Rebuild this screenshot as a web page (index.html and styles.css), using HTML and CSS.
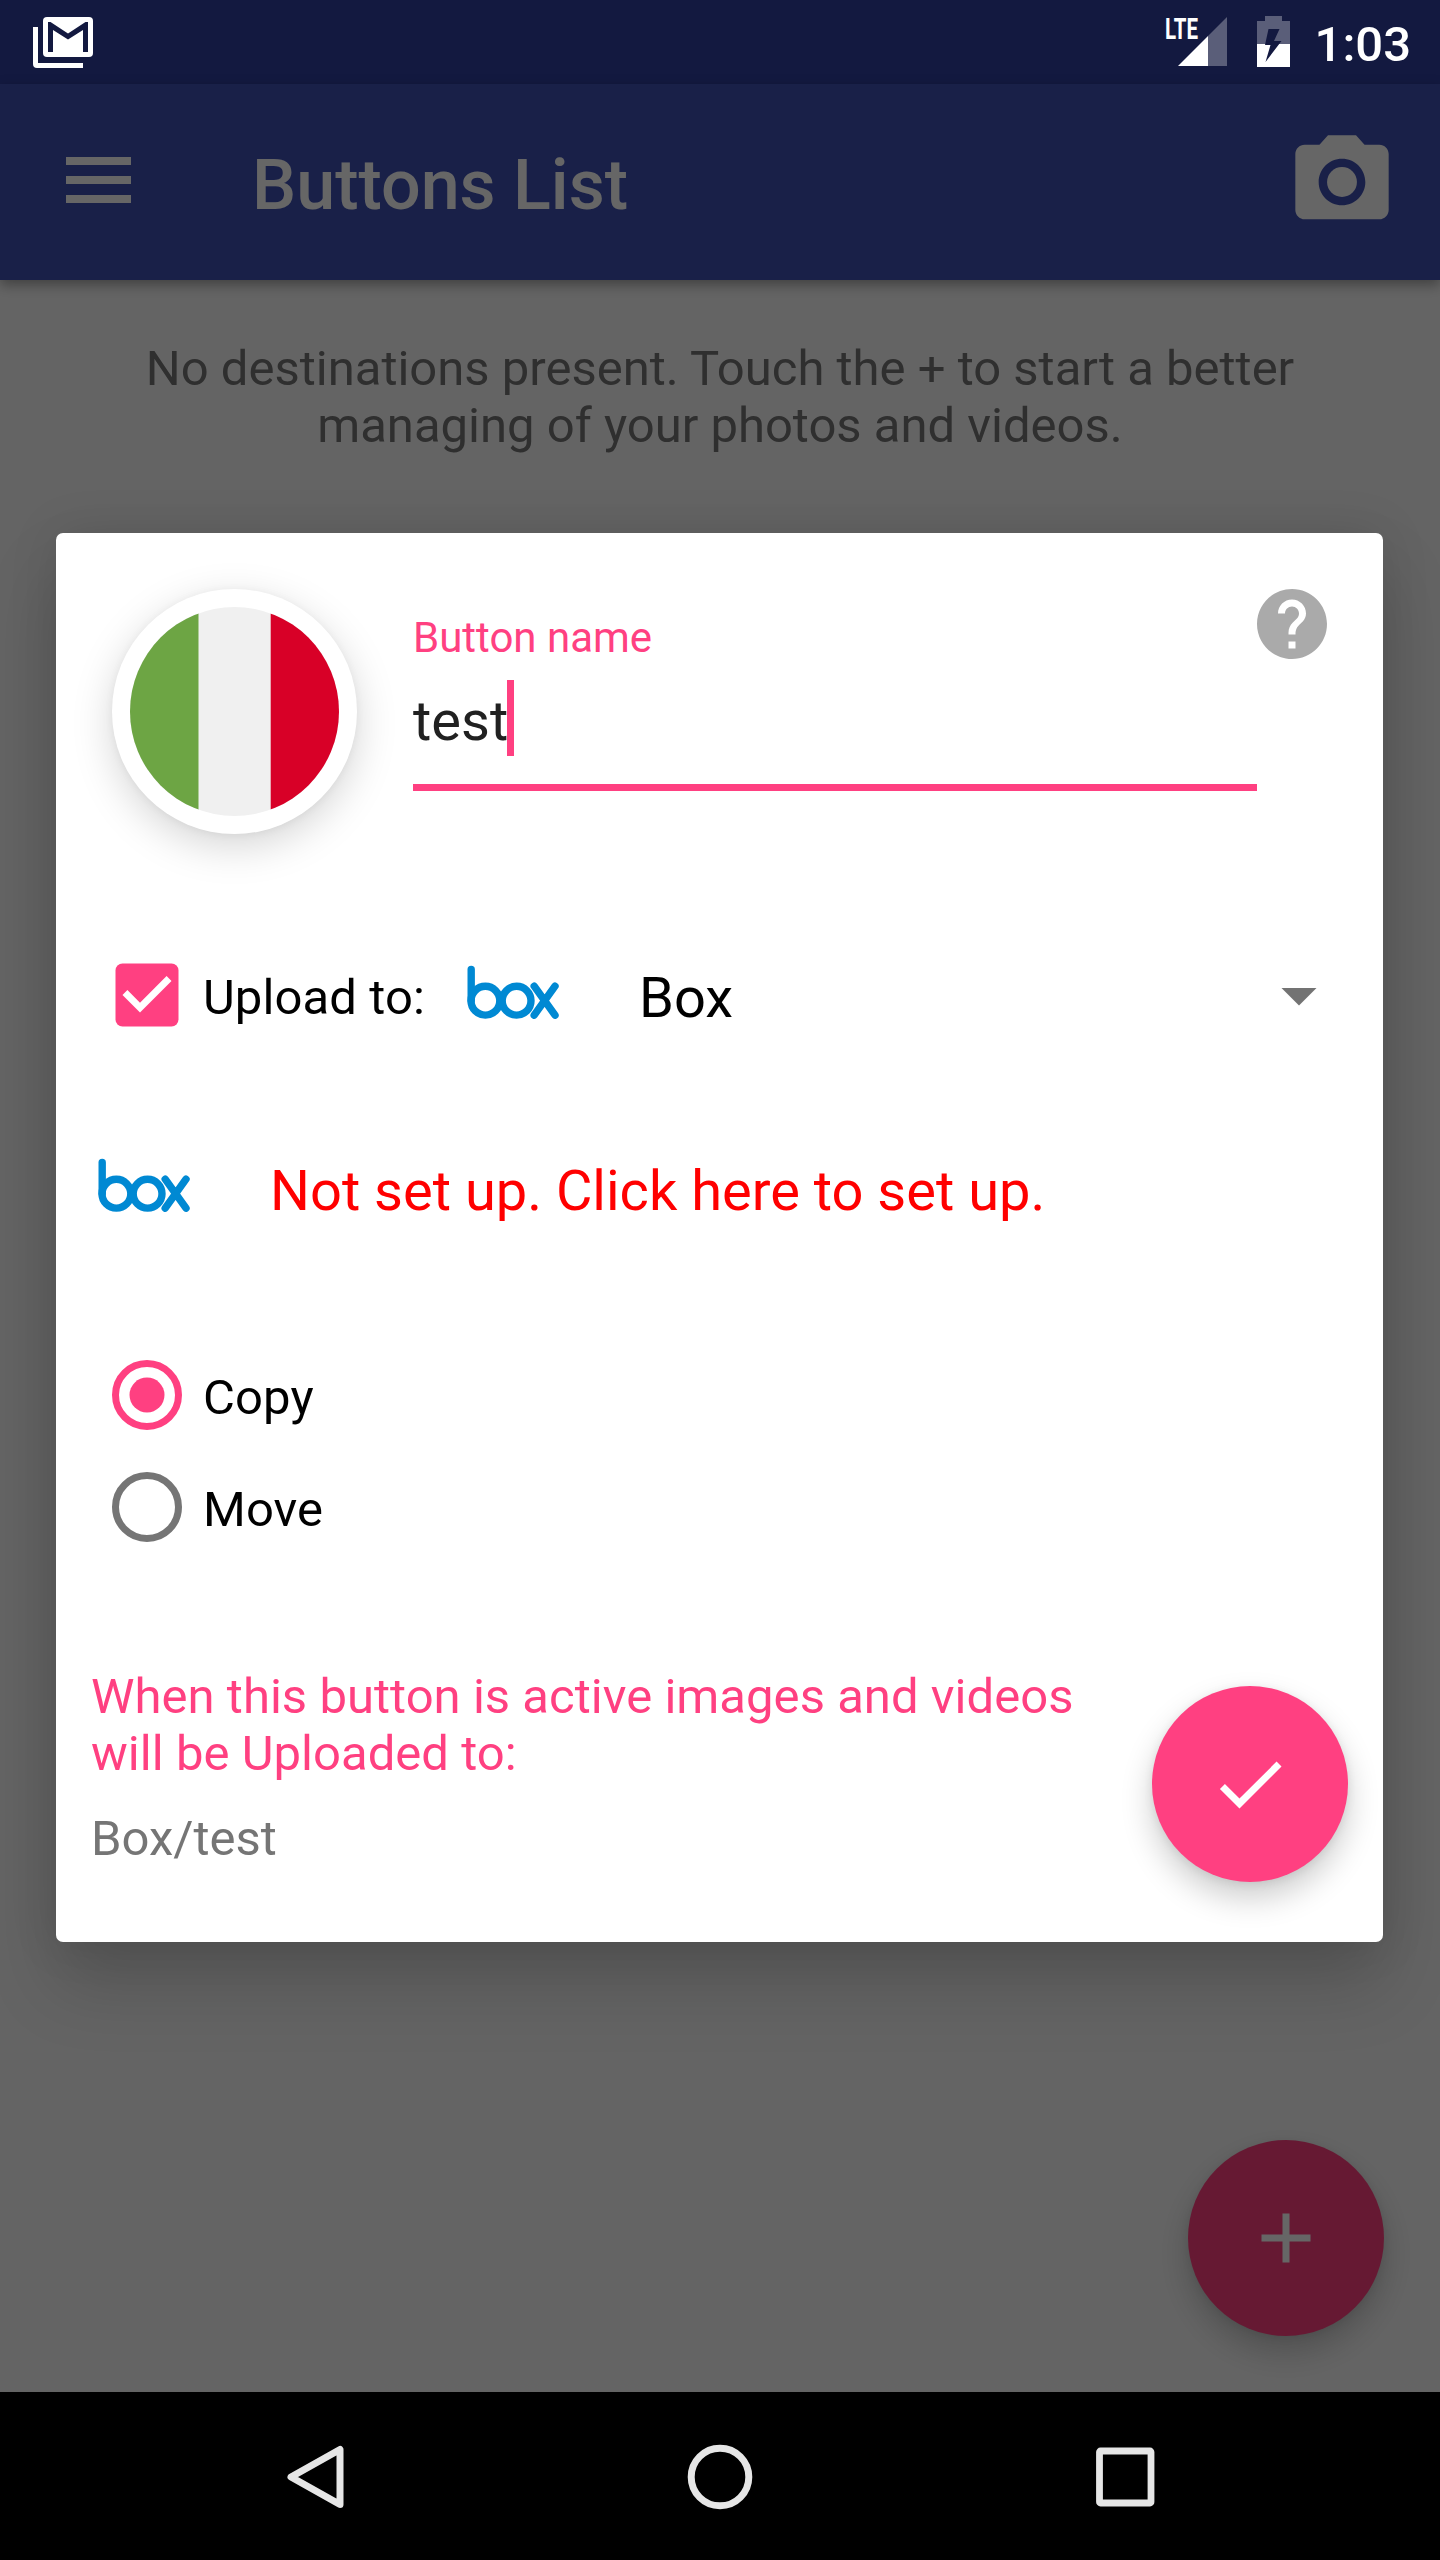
FILE: index.html
```html
<!DOCTYPE html>
<html lang="en">
<head>
<meta charset="utf-8">
<title>Buttons List</title>
<link rel="stylesheet" href="styles.css">
</head>
<body>
<svg class="defs" width="0" height="0" aria-hidden="true">
  <symbol id="box-logo" viewBox="0 0 100 60">
    <g fill="none" stroke="#0089d3" stroke-width="7.4" stroke-linecap="round">
      <path d="M8.2 7.5V38.7"/>
      <circle cx="22.4" cy="38.7" r="14.4"/>
      <circle cx="53.6" cy="38.7" r="14.4"/>
      <path d="M71.2 24.2L92 53.2M92 24.2L71.2 53.2"/>
    </g>
  </symbol>
</svg>
<div class="screen">
  <header class="status-bar">
    <svg class="gmail" width="61" height="51" viewBox="0 0 61 51">
      <path fill="#fff" d="M0 10h5v36h45v5H4q-4 0-4-4z"/>
      <rect x="10" width="50" height="40" rx="4" fill="#fff"/>
      <path fill="#131940" d="M15 5h2.500L35 16.500 52.500 5H55v30h-5V13L35 22.500 20 13v22h-5z"/>
    </svg>
    <svg class="signal" width="66" height="50" viewBox="-4 0 66 50">
      <path fill="#5a5e79" d="M42 20L61 1v49H42z"/>
      <path fill="#fff" d="M12 50L42 20v30z"/>
      <text x="-1" y="23" font-size="30" font-weight="700" fill="#fff" textLength="33" lengthAdjust="spacingAndGlyphs">LTE</text>
    </svg>
    <svg class="battery" width="33" height="51" viewBox="0 0 33 51">
      <path fill="#5a5e79" d="M8 0h17v5h8v23H0V5h8z"/>
      <path fill="#fff" d="M0 28h33v23H0z"/>
      <path fill="#131940" d="M11.500 13h11l-5.500 12h7.500L8.500 46l5-17H8z"/>
    </svg>
    <span class="clock">1:03</span>
  </header>
  <div class="app">
    <div class="toolbar">
      <svg class="menu" width="65" height="46" viewBox="0 0 65 46"><path fill="#fff" d="M0 0h65v8H0zM0 19h65v8H0zM0 38h65v8H0z"/></svg>
      <h1 class="title">Buttons List</h1>
      <svg class="camera" width="112" height="112" viewBox="0 0 24 24"><circle cx="12" cy="12" r="3.200" fill="#fff"/><path fill="#fff" d="M9 2L7.170 4H4c-1.100 0-2 .9-2 2v12c0 1.100.9 2 2 2h16c1.100 0 2-.9 2-2V6c0-1.100-.9-2-2-2h-3.170L15 2H9zm3 15c-2.760 0-5-2.240-5-5s2.240-5 5-5 5 2.240 5 5-2.240 5-5 5z"/></svg>
    </div>
    <main class="content">
      <p class="empty">No destinations present. Touch the + to start a better<br>managing of your photos and videos.</p>
      <button class="fab fab-add" aria-label="Add"><svg width="84" height="84" viewBox="0 0 24 24"><path fill="#fff" d="M19 13h-6v6h-2v-6H5v-2h6V5h2v6h6z"/></svg></button>
    </main>
    <div class="scrim"></div>
  </div>
  <section class="dialog">
    <div class="head">
      <div class="avatar">
        <svg width="209" height="209" viewBox="0 0 209 209">
          <clipPath id="disc"><circle cx="104.500" cy="104.500" r="104.500"/></clipPath>
          <g clip-path="url(#disc)"><path fill="#f0f0f0" d="M0 0h209v209H0z"/><path fill="#6da544" d="M0 0h68.500v209H0z"/><path fill="#d80027" d="M140.700 0H209v209h-68.300z"/></g>
        </svg>
      </div>
      <div class="field">
        <div class="field-label">Button name</div>
        <div class="field-value"><span>test</span><i class="cursor"></i></div>
        <div class="underline"></div>
      </div>
      <svg class="help" width="70" height="70" viewBox="2 2 20 20"><path fill="#aaa" d="M12 2C6.480 2 2 6.480 2 12s4.480 10 10 10 10-4.480 10-10S17.520 2 12 2zm1 17h-2v-2h2v2zm2.070-7.750l-.9.920C13.450 12.900 13 13.500 13 15h-2v-.5c0-1.100.45-2.100 1.170-2.830l1.240-1.260c.37-.36.59-.86.59-1.410 0-1.100-.9-2-2-2s-2 .9-2 2H8c0-2.210 1.790-4 4-4s4 1.790 4 4c0 .88-.36 1.680-.93 2.250z"/></svg>
    </div>
    <div class="upload">
      <svg width="84" height="84" viewBox="0 0 24 24"><rect x="3" y="3" width="18" height="18" rx="2" fill="#ff4081"/><path fill="#fff" d="M10 17l-5-5 1.400-1.400L10 14.200l7.600-7.600L19 8z"/></svg>
      <span class="option upload-label">Upload to:</span>
      <svg class="logo" width="100" height="60"><use href="#box-logo"/></svg>
      <span class="service">Box</span>
      <svg class="caret" width="84" height="84" viewBox="0 0 24 24"><path fill="#737373" d="M7 10l5 5 5-5z"/></svg>
    </div>
    <div class="account">
      <svg class="logo" width="100" height="60"><use href="#box-logo"/></svg>
      <span class="service warning">Not set up. Click here to set up.</span>
    </div>
    <div class="radios">
      <div class="radio"><svg width="84" height="84" viewBox="0 0 84 84"><circle cx="42" cy="42" r="31.500" fill="none" stroke="#ff4081" stroke-width="7"/><circle cx="42" cy="42" r="17.500" fill="#ff4081"/></svg><span class="option">Copy</span></div>
      <div class="radio"><svg width="84" height="84" viewBox="0 0 84 84"><circle cx="42" cy="42" r="31.500" fill="none" stroke="#757575" stroke-width="7"/></svg><span class="option">Move</span></div>
    </div>
    <div class="foot">
      <div>
        <p class="summary">When this button is active images and videos<br>will be Uploaded to:</p>
        <p class="path">Box/test</p>
      </div>
      <button class="fab fab-ok" aria-label="Confirm"><svg width="84" height="84" viewBox="0 0 24 24"><path fill="#fff" d="M9 16.170L4.830 12l-1.420 1.410L9 19 21 7l-1.410-1.410z"/></svg></button>
    </div>
  </section>
  <nav class="nav-bar">
    <svg width="66" height="66" viewBox="0 0 66 66"><path fill="none" stroke="#e6e6e6" stroke-width="7" stroke-linejoin="round" d="M58 5.500v55L9 33z"/></svg>
    <svg width="66" height="66" viewBox="0 0 66 66"><circle cx="33" cy="33" r="28.800" fill="none" stroke="#e6e6e6" stroke-width="7"/></svg>
    <svg width="66" height="66" viewBox="0 0 66 66"><rect x="7.500" y="7" width="51.500" height="52" rx="1" fill="none" stroke="#e6e6e6" stroke-width="6.800"/></svg>
  </nav>
</div>
</body>
</html>
```
FILE: styles.css
```css
* { box-sizing: border-box; }
body { margin: 0; font-family: Roboto, "Noto Sans", sans-serif; font-size: 49px; line-height: 57px; }
p, h1 { margin: 0; }
svg { display: block; flex: none; }
button { border: 0; padding: 0; }
.defs { position: absolute; }
.screen { position: relative; width: 1440px; height: 2560px; display: flex; flex-direction: column; overflow: hidden; background: #000; }

.status-bar { height: 84px; flex: none; display: flex; align-items: flex-start; padding: 16px 29px 0 33px; background: #131940; color: #fff; }
.gmail { margin-top: 1px; }
.signal { margin-left: auto; overflow: visible; }
.battery { margin-left: 29px; }
.clock { margin-left: 24px; width: 97px; font-weight: 500; font-size: 49px; line-height: 57px; text-align: right; }

.app { position: relative; flex: 1; display: flex; flex-direction: column; background: #fafafa; }
.toolbar { position: relative; height: 196px; flex: none; display: flex; align-items: center; padding: 0 42px 0 65.5px; background: #3f51b5; color: #fff; box-shadow: 0 5px 12px rgba(0, 0, 0, .35); }
.menu { margin-top: -4px; }
.title { margin-left: 121.5px; padding-top: 6px; font-size: 70px; line-height: 82px; font-weight: 500; }
.camera { margin-left: auto; }
.content { flex: 1; display: flex; flex-direction: column; justify-content: space-between; padding: 60px 56px; }
.empty { color: #757575; text-align: center; }
.scrim { position: absolute; inset: 0; background: rgba(0, 0, 0, .6); }

.fab { display: flex; align-items: center; justify-content: center; width: 196px; height: 196px; flex: none; border-radius: 50%; background: #ff4081; box-shadow: 0 16px 32px rgba(0, 0, 0, .2), 0 2px 10px rgba(0, 0, 0, .08); }
.fab-add { align-self: flex-end; margin-bottom: -4px; }

.dialog { position: absolute; left: 56px; top: 533px; width: 1327px; height: 1409px; padding-top: 56px; border-radius: 7px; background: #fff; box-shadow: 0 42px 70px rgba(0, 0, 0, .17), 0 0 50px rgba(0, 0, 0, .1); }
.head { display: flex; align-items: flex-start; padding: 0 56px; }
.avatar { display: flex; align-items: center; justify-content: center; width: 245px; height: 245px; border-radius: 50%; background: #fff; box-shadow: 0 12px 40px rgba(0, 0, 0, .17), 0 1px 8px rgba(0, 0, 0, .05); }
.field { flex: 1; margin-left: 56px; padding-top: 24px; }
.field-label { font-size: 42px; line-height: 50px; color: #ff4081; }
.field-value { display: flex; align-items: flex-start; height: 76px; margin-top: 17px; font-size: 56px; line-height: 82px; color: #212121; }
.cursor { width: 7px; height: 76px; margin-left: -1px; background: #ff4081; }
.underline { height: 7px; margin-top: 28px; background: #ff4081; }
.upload { display: flex; align-items: center; height: 84px; margin-top: 119px; padding: 0 42px 0 49px; }
.option { margin-left: 14px; padding-top: 4px; color: #000; letter-spacing: .1px; }
.upload-label { width: 260px; }
.logo { margin-bottom: 6px; }
.service { margin-left: 76px; padding-top: 6px; font-size: 56px; line-height: 66px; color: #000; }
.warning { color: #f00; }
.caret { margin-left: auto; }
.account { display: flex; align-items: center; height: 84px; margin-top: 109px; padding-left: 38px; }
.radios { display: flex; flex-direction: column; gap: 28px; margin-top: 123px; padding-left: 49px; }
.radio { display: flex; align-items: center; height: 84px; }
.foot { display: flex; justify-content: space-between; align-items: flex-start; margin-top: 119px; padding: 0 35px; }
.summary { color: #ff4081; letter-spacing: .035px; }
.path { margin-top: 28px; color: #757575; }
.fab-ok { margin-top: 18px; }

.nav-bar { height: 168px; flex: none; display: flex; align-items: center; justify-content: space-between; padding: 1px 282px 0 282px; background: #000; }
```
